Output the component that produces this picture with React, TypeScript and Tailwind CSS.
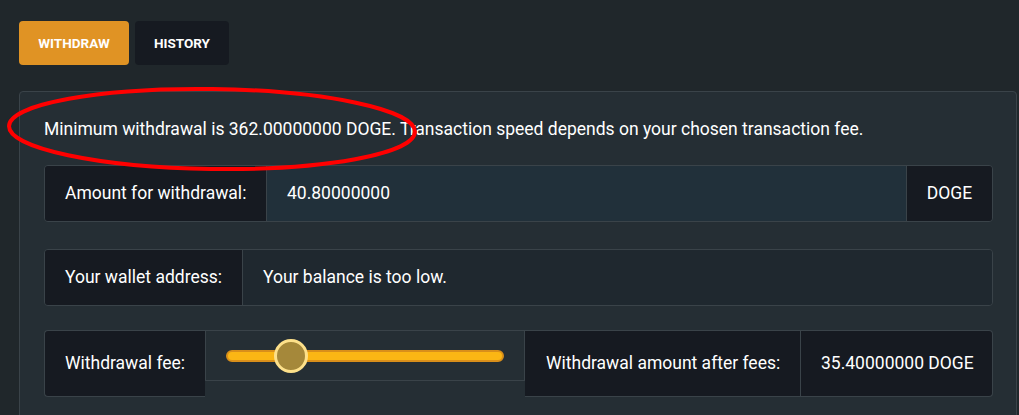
import React from "react";

export default function App() {
  const font = { fontFamily: "Roboto, 'Noto Sans', sans-serif" };
  return (
    <div className="relative w-[1019px] h-[415px] overflow-hidden bg-[#20272b] text-white" style={font}>
      <div className="flex gap-[6px] pl-[19px] pt-[21px]">
        <button className="h-[44px] w-[110px] rounded-[4px] bg-[#e09324] text-[13.5px] font-bold text-white">WITHDRAW</button>
        <button className="h-[44px] w-[94px] rounded-[4px] bg-[#161a21] text-[13.5px] font-bold text-white">HISTORY</button>
      </div>
      <div className="ml-[19px] mt-[26px] w-[998px] h-[400px] rounded-[4px] border border-[#3a4349] bg-[#252e34] px-[24px] pt-[24px] whitespace-nowrap">
        <p className="text-[17.5px] leading-[26px]">
          Minimum withdrawal is 362.00000000 DOGE. Transaction speed depends on your chosen transaction fee.
        </p>
        <div className="mt-[23px] flex h-[57px] w-[949px] overflow-hidden rounded-[4px] border border-[#3a4349] text-[17.5px]">
          <div className="flex w-[221px] shrink-0 items-center bg-[#161a21] px-[20px]">Amount for withdrawal:</div>
          <div className="flex flex-1 items-center border-l border-[#3a4349] bg-[#21303a] px-[20px]">40.80000000</div>
          <div className="flex w-[86px] shrink-0 items-center justify-center border-l border-[#3a4349] bg-[#161a21]">DOGE</div>
        </div>
        <div className="mt-[27px] flex h-[57px] w-[949px] overflow-hidden rounded-[4px] border border-[#3a4349] text-[17.5px]">
          <div className="flex w-[197px] shrink-0 items-center bg-[#161a21] px-[20px]">Your wallet address:</div>
          <div className="flex flex-1 items-center border-l border-[#3a4349] bg-[#1f282f] px-[20px]">Your balance is too low.</div>
        </div>
        <div className="mt-[24px] flex h-[67px] w-[949px] items-start text-[17.5px]">
          <div className="flex h-[67px] w-[161px] shrink-0 items-center rounded-l-[4px] border border-r-0 border-[#3a4349] bg-[#161a21] px-[20px]">
            Withdrawal fee:
          </div>
          <div className="flex h-[51px] w-[320px] shrink-0 items-center border border-[#3a4349] bg-[#252e34] px-[20px]">
            <div className="relative h-[12px] w-full rounded-full border-2 border-[#d98f1a] bg-[#fbb614]">
              <div className="absolute left-[46px] top-1/2 h-[34px] w-[34px] -translate-y-1/2 rounded-full border-[3px] border-[#fde08a] bg-[#a5883a]" />
            </div>
          </div>
          <div className="flex h-[67px] flex-1 overflow-hidden rounded-r-[4px] border border-l-0 border-[#3a4349] bg-[#161a21]">
            <div className="flex w-[275px] shrink-0 items-center px-[21px]">Withdrawal amount after fees:</div>
            <div className="flex flex-1 items-center border-l border-[#3a4349] px-[20px]">35.40000000 DOGE</div>
          </div>
        </div>
      </div>
      <svg className="pointer-events-none absolute left-0 top-0" width="1019" height="415">
        <ellipse cx="212" cy="129" rx="203" ry="40" fill="none" stroke="#ff0000" strokeWidth="4" transform="rotate(0.8 212 129)" />
      </svg>
    </div>
  );
}
